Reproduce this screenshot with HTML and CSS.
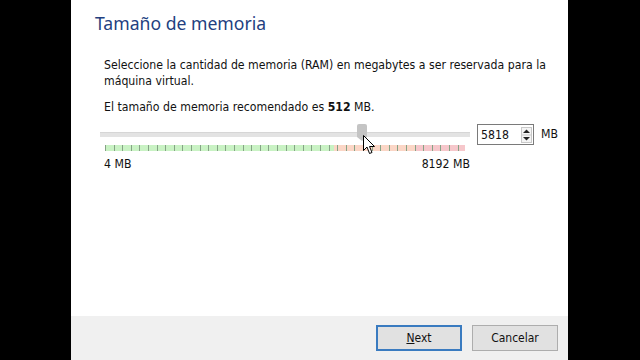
FILE: index.html
```html
<!DOCTYPE html>
<html lang="es">
<head>
  <meta charset="UTF-8">
  <title>Tamaño de memoria</title>
  <link rel="stylesheet" href="styles.css">
</head>
<body>
  <div class="wizard">
    <div class="page">
      <h1 class="page-title">Tamaño de memoria</h1>
      <p class="desc">Seleccione la cantidad de memoria (RAM) en megabytes a ser reservada para la máquina virtual.</p>
      <p class="desc">El tamaño de memoria recomendado es <b>512</b> MB.</p>

      <!-- selector de memoria -->
      <div class="mem-row">
        <div class="slider">
          <div class="track"></div>
          <div class="thumb"></div>
          <div class="scale"></div>
          <div class="limits">
            <span>4 MB</span>
            <span>8192 MB</span>
          </div>
          <svg class="cursor" width="13" height="20" viewBox="0 0 13 20">
            <path d="M0.5 0.5 L0.5 15.5 L4 12 L6.5 18.5 L9 17.5 L6.5 11.5 L11.5 11.5 Z" fill="#fff" stroke="#000" stroke-width="1"/>
          </svg>
        </div>
        <div class="spin">
          <span class="spin-value">5818</span>
          <div class="spin-btns">
            <svg width="11" height="16" viewBox="0 0 11 16">
              <rect x="0.5" y="0.5" width="10" height="15" fill="#f4f4f4" stroke="#c8c8c8"/>
              <line x1="1" y1="8" x2="10" y2="8" stroke="#c8c8c8"/>
              <path d="M2 6 L5.5 2.5 L9 6 Z" fill="#222"/>
              <path d="M2 10 L5.5 13.5 L9 10 Z" fill="#222"/>
            </svg>
          </div>
        </div>
        <span class="unit">MB</span>
      </div>
    </div>

    <div class="footer">
      <button class="btn btn-default"><u>N</u>ext</button>
      <button class="btn">Cancelar</button>
    </div>
  </div>
</body>
</html>
```

FILE: styles.css
```css
body {
  margin: 0;
  background: #000;
  font-family: "DejaVu Sans Condensed", "DejaVu Sans", sans-serif;
  font-size: 12.2px;
  color: #111;
}
/* Ventana del asistente */
.wizard {
  width: 497px;
  height: 360px;
  margin-left: 71px;
  background: #fff;
  display: flex;
  flex-direction: column;
}
.page {
  flex: 1;
  padding: 11px 0 0 24px;
}
.page-title {
  margin: 0 0 22px 0;
  font-family: "Noto Sans", "Open Sans", sans-serif;
  font-weight: normal;
  font-size: 17.6px;
  color: #23407f;
}
.desc {
  margin: 0 20px 10px 9px;
  line-height: 16px;
}
/* Fila del slider */
.mem-row {
  display: flex;
  align-items: flex-start;
  margin-top: 11px;
  margin-left: 5px;
}
.slider {
  position: relative;
  flex-shrink: 0;
  width: 370px;
  padding-top: 6px;
}
.track {
  height: 4px;
  background: #e3e3e3;
  border-top: 1px solid #d6d6d6;
}
.thumb {
  position: absolute;
  left: 257px;
  top: -2px;
  width: 10px;
  height: 13px;
  background: #c4c4c4;
  border-radius: 2px 2px 0 0;
}
.thumb::after {
  content: "";
  position: absolute;
  left: 0;
  top: 13px;
  border-left: 5px solid transparent;
  border-right: 5px solid transparent;
  border-top: 4px solid #c4c4c4;
}
.scale {
  margin: 8px 5px 0 5px;
  height: 6px;
  background:
    repeating-linear-gradient(to right, #86a386 0 1px, transparent 1px 8.6px),
    linear-gradient(to right, #c9f2c4 0 229px, #fbd6c6 229px 311px, #f6c7cb 311px);
}
.limits {
  display: flex;
  justify-content: space-between;
  margin: 6px 0 0 4px;
}
.cursor {
  position: absolute;
  left: 263px;
  top: 9px;
}
/* Caja numérica */
.spin {
  display: flex;
  flex-shrink: 0;
  align-items: center;
  justify-content: space-between;
  width: 51px;
  height: 19px;
  margin-left: 7px;
  margin-top: -2px;
  border: 1px solid #7a7a7a;
  padding: 0 1px 0 3px;
}
.spin-btns svg {
  display: block;
}
.unit {
  margin-left: 7px;
  margin-top: 1px;
}
/* Barra inferior */
.footer {
  height: 44px;
  background: #f0f0f0;
  display: flex;
  justify-content: flex-end;
  align-items: center;
  gap: 10px;
  padding-right: 10px;
}
.btn {
  width: 86px;
  height: 26px;
  font-family: "DejaVu Sans Condensed", "DejaVu Sans", sans-serif;
  font-size: 12px;
  background: #e1e1e1;
  border: 1px solid #adadad;
  color: #111;
  padding: 0;
}
.btn-default {
  border: 2px solid #3a7bc0;
}
```
